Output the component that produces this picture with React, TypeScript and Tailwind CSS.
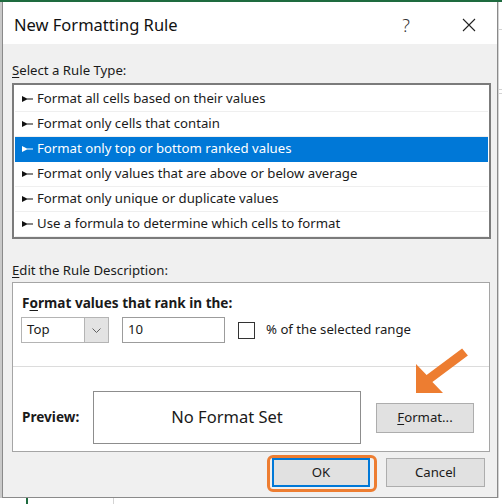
import React from 'react';

const ruleTypes = [
  'Format all cells based on their values',
  'Format only cells that contain',
  'Format only top or bottom ranked values',
  'Format only values that are above or below average',
  'Format only unique or duplicate values',
  'Use a formula to determine which cells to format',
];

const RuleIcon: React.FC<{ color: string }> = ({ color }) => (
  <svg width="11" height="6" viewBox="0 0 11 6" className="shrink-0">
    <polygon points="0,0 5,2.4 11,2.4 11,3.6 5,3.6 0,6" fill={color} />
  </svg>
);

const App: React.FC = () => {
  const selected = 2;

  return (
    <div className="w-[502px] h-[504px] bg-white relative overflow-hidden font-['Noto_Sans',sans-serif] text-[#1a1a1a]">
      <div className="h-[2px] bg-[#1e6b3f]" />

      <div className="flex h-[496px]">
        <div className="w-[2px] bg-[#c9c9c9]" />

        {/* dialog window */}
        <div className="w-[496px] flex flex-col border-l border-r border-b border-[#8a8a8a]">
          {/* title bar */}
          <div className="h-[42px] bg-white flex items-center pl-[11px] pt-[5px]">
            <span className="text-[16.5px] text-[#111]">New Formatting Rule</span>
            <span className="ml-auto mr-[52px] text-[18px] font-light text-[#333]">?</span>
            <svg width="14" height="14" viewBox="0 0 14 14" className="mr-[21px] -mt-[2px]">
              <path d="M1 1 L13 13 M13 1 L1 13" stroke="#222" strokeWidth="1.1" />
            </svg>
          </div>

          {/* body */}
          <div className="flex-1 bg-[#f0f0f0] pl-[9px] pr-[6px] flex flex-col">
            <div className="mt-[18px] h-[16px] leading-[16px] text-[13.2px]">
              <span className="underline underline-offset-2">S</span>elect a Rule Type:
            </div>

            <div className="mt-[5px] h-[156px] bg-white border-2 border-[#7b7b7b] pt-[2px] px-[1px]">
              {ruleTypes.map((rule, i) => (
                <div
                  key={rule}
                  className={`h-[25px] flex items-center pl-[7px] gap-[4px] text-[13.2px] border-b ${
                    i === selected ? 'bg-[#0078d7] text-white border-[#0078d7]' : 'border-[#efefef]'
                  }`}
                >
                  <RuleIcon color={i === selected ? '#ffffff' : '#111111'} />
                  <span>{rule}</span>
                </div>
              ))}
            </div>

            <div className="mt-[23px] h-[16px] leading-[16px] text-[13.2px]">
              <span className="underline underline-offset-2">E</span>dit the Rule Description:
            </div>

            <div className="mt-[4px] w-[478px] h-[170px] bg-white border border-[#a5a5a5] flex flex-col">
              <div className="h-[84px] border-b border-[#dcdcdc] pl-[9px] pt-[12px]">
                <div className="h-[16px] leading-[16px] text-[13.6px] font-bold">
                  F<span className="underline underline-offset-2">o</span>rmat values that rank in the:
                </div>
                <div className="mt-[6px] flex items-center -ml-[1px]">
                  <div className="w-[88px] h-[26px] border border-[#b4b4b4] bg-white flex items-center">
                    <span className="pl-[5px] text-[13.2px] flex-1">Top</span>
                    <div className="w-[24px] h-[24px] bg-[#e3e3e3] border-l border-[#b4b4b4] flex items-center justify-center">
                      <svg width="9" height="5" viewBox="0 0 9 5">
                        <path d="M0.5 0.5 L4.5 4.5 L8.5 0.5" stroke="#606060" fill="none" strokeWidth="1" />
                      </svg>
                    </div>
                  </div>
                  <div className="ml-[13px] w-[103px] h-[26px] border border-[#9c9c9c] bg-white flex items-center pl-[5px] text-[13.2px]">
                    10
                  </div>
                  <div className="ml-[13px] w-[17px] h-[17px] border border-[#333] bg-white" />
                  <span className="ml-[11px] text-[13.2px]">% of the selected range</span>
                </div>
              </div>

              <div className="flex-1 pt-[24px] pl-[9px]">
                <div className="flex items-center h-[53px]">
                  <span className="w-[71px] text-[13.6px] font-bold">Preview:</span>
                  <div className="w-[268px] h-[53px] border border-[#8d8d8d] flex items-center justify-center text-[16.5px]">
                    No Format Set
                  </div>
                  <button className="ml-[15px] w-[98px] h-[30px] bg-[#e1e1e1] border border-[#adadad] text-[13.2px]">
                    <span className="underline underline-offset-2">F</span>ormat...
                  </button>
                </div>
              </div>
            </div>

            <div className="mt-[6px] flex justify-end pr-[6px] gap-[16px]">
              <div className="relative">
                <div className="absolute -left-[5px] -top-[3px] -right-[7px] -bottom-[5px] rounded-[6px] border-[3px] border-[#ed7d31]" />
                <button className="relative w-[98px] h-[29px] bg-[#e1e1e1] border-2 border-[#0078d7] text-[13.2px]">
                  OK
                </button>
              </div>
              <button className="w-[99px] h-[29px] bg-[#e1e1e1] border border-[#adadad] text-[13.2px]">
                Cancel
              </button>
            </div>
          </div>
        </div>

        {/* worksheet sliver on the right */}
        <div className="flex-1 bg-white border-l border-[#d4d4d4] flex flex-col">
          <div className="h-[28px] border-b border-[#d4d4d4]" />
          <div className="h-[60px] border-b border-[#d4d4d4]" />
          <div className="h-[4px] border-b border-[#d4d4d4]" />
        </div>
      </div>

      {/* worksheet strip at the bottom */}
      <div className="h-[6px] flex bg-white">
        <div className="w-[28px] border-r-2 border-[#1e6b3f]" />
        <div className="w-[86px] border-r border-[#d4d4d4]" />
      </div>

      {/* orange annotation arrow */}
      <svg className="absolute left-[400px] top-[340px]" width="80" height="60" viewBox="0 0 80 60">
        <polygon
          points="16,53 16,24 26.6,35 62.1,8.5 67.9,15.5 32.4,42 43,53"
          fill="#ed7d31"
        />
      </svg>
    </div>
  );
};

export default App;
